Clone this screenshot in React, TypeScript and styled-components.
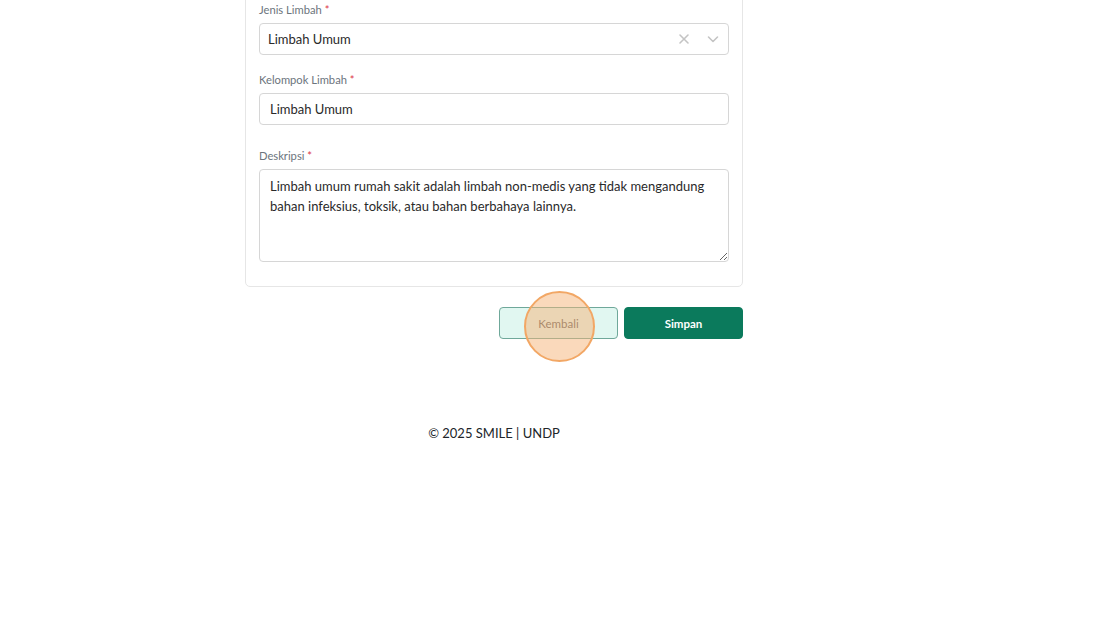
import styled, { createGlobalStyle } from 'styled-components';

const GlobalStyle = createGlobalStyle`
  html, body {
    margin: 0;
    padding: 0;
    background: #ffffff;
    font-family: Lato, "Liberation Sans", sans-serif;
    color: #212529;
  }
  * {
    box-sizing: border-box;
  }
`;

export default function App() {
  return (
    <Page>
      <GlobalStyle />
      <Column>
        <Card>
          <Field>
            <Label>
              Jenis Limbah <Required>*</Required>
            </Label>
            <SelectBox>
              <SelectValue>Limbah Umum</SelectValue>
              <SelectIcons>
                <IconSlot>
                  <svg width="12" height="12" viewBox="0 0 12 12" fill="none" stroke="#c4c4c4" strokeWidth="1.6" strokeLinecap="round">
                    <path d="M2 2l8 8M10 2l-8 8" />
                  </svg>
                </IconSlot>
                <IconSlot>
                  <svg width="14" height="14" viewBox="0 0 14 14" fill="none" stroke="#c4c4c4" strokeWidth="1.6" strokeLinecap="round" strokeLinejoin="round">
                    <path d="M2.5 5l4.5 4.5L11.5 5" />
                  </svg>
                </IconSlot>
              </SelectIcons>
            </SelectBox>
          </Field>

          <Field>
            <Label>
              Kelompok Limbah <Required>*</Required>
            </Label>
            <TextInput defaultValue="Limbah Umum" />
          </Field>

          <Field $spaced>
            <Label>
              Deskripsi <Required>*</Required>
            </Label>
            <TextArea defaultValue="Limbah umum rumah sakit adalah limbah non-medis yang tidak mengandung bahan infeksius, toksik, atau bahan berbahaya lainnya." />
          </Field>
        </Card>

        <Actions>
          <ButtonWrap>
            <Button $variant="secondary">Kembali</Button>
            <ClickMarker />
          </ButtonWrap>
          <Button $variant="primary">Simpan</Button>
        </Actions>

        <Footer>© 2025 SMILE | UNDP</Footer>
      </Column>
    </Page>
  );
}

const Page = styled.div`
  width: 100%;
  min-height: 626px;
  display: flex;
  justify-content: flex-start;
  padding-left: 245px;
  overflow: hidden;
`;

const Column = styled.div`
  width: 498px;
  display: flex;
  flex-direction: column;
`;

const Card = styled.div`
  margin-top: -12px;
  border: 1px solid #e6e6e6;
  border-radius: 5px;
  padding: 12px 13px 24px 13px;
  display: flex;
  flex-direction: column;
  background: #ffffff;
`;

const Field = styled.div<{ $spaced?: boolean }>`
  display: flex;
  flex-direction: column;
  margin-top: ${({ $spaced }) => ($spaced ? '22px' : '16px')};
  &:first-child {
    margin-top: 0;
  }
`;

const Label = styled.label`
  font-size: 11.2px;
  line-height: 18px;
  color: #6c757d;
  margin-bottom: 4px;
`;

const Required = styled.span`
  color: #dc3545;
`;

const SelectBox = styled.div`
  height: 32px;
  border: 1px solid #d6d6d6;
  border-radius: 4px;
  display: flex;
  align-items: center;
  padding-left: 8px;
  background: #ffffff;
`;

const SelectValue = styled.div`
  flex: 1;
  font-size: 13px;
  color: #2a2a2a;
`;

const SelectIcons = styled.div`
  display: flex;
  align-items: center;
  padding-right: 1px;
`;

const IconSlot = styled.span`
  width: 29px;
  display: flex;
  justify-content: center;
  align-items: center;
`;

const TextInput = styled.input`
  height: 32px;
  border: 1px solid #d6d6d6;
  border-radius: 4px;
  padding: 0 10px;
  font-family: Lato, "Liberation Sans", sans-serif;
  font-size: 13px;
  color: #2a2a2a;
  outline: none;
`;

const TextArea = styled.textarea`
  height: 93px;
  border: 1px solid #d6d6d6;
  border-radius: 4px;
  padding: 6px 10px;
  font-family: Lato, "Liberation Sans", sans-serif;
  font-size: 13px;
  line-height: 20px;
  color: #2a2a2a;
  outline: none;
  resize: vertical;
`;

const Actions = styled.div`
  display: flex;
  justify-content: flex-end;
  gap: 6px;
  margin-top: 20px;
`;

const ButtonWrap = styled.div`
  position: relative;
  display: flex;
`;

const Button = styled.button<{ $variant: 'primary' | 'secondary' }>`
  width: 119px;
  height: 32px;
  border-radius: 4px;
  font-family: Lato, "Liberation Sans", sans-serif;
  font-size: 11.5px;
  cursor: pointer;
  border: 1px solid
    ${({ $variant }) => ($variant === 'primary' ? '#0b7a5c' : '#6fa89a')};
  background: ${({ $variant }) =>
    $variant === 'primary' ? '#0b7a5c' : '#e1f7f1'};
  color: ${({ $variant }) => ($variant === 'primary' ? '#ffffff' : '#5f5f5f')};
  font-weight: ${({ $variant }) => ($variant === 'primary' ? 700 : 400)};
`;

const ClickMarker = styled.span`
  position: absolute;
  left: 25px;
  top: -16px;
  width: 71px;
  height: 71px;
  border-radius: 50%;
  background: rgba(245, 180, 120, 0.5);
  border: 2px solid #f2a765;
  pointer-events: none;
`;

const Footer = styled.div`
  margin-top: 86px;
  text-align: center;
  font-size: 13px;
  color: #212529;
`;
